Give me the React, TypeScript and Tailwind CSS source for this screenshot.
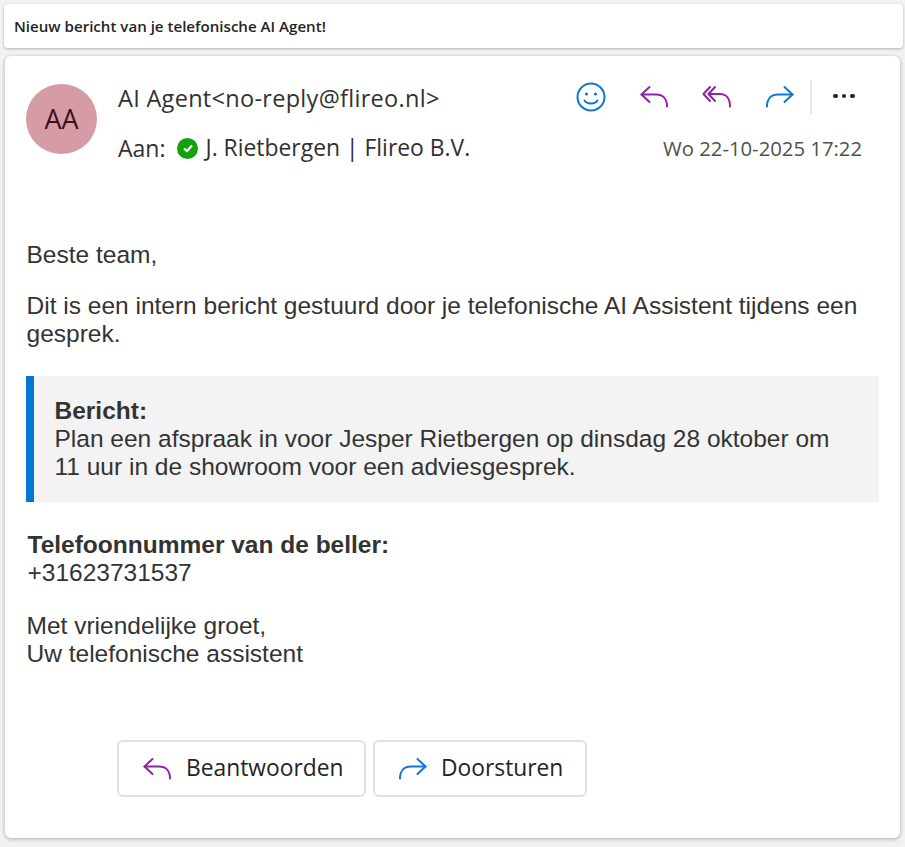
import React from "react";

const ReplyIcon = ({ className }: { className?: string }) => (
  <svg viewBox="0 0 30 24" fill="none" stroke="currentColor" strokeWidth="2" className={className}>
    <path d="M10.5 2 L2.5 9.5 L10.5 17" strokeLinecap="round" strokeLinejoin="round" />
    <path d="M2.5 9.5 H17 C23.5 9.5 28 13.5 28 21.5" strokeLinecap="round" />
  </svg>
);

const ReplyAllIcon = ({ className }: { className?: string }) => (
  <svg viewBox="0 0 30 24" fill="none" stroke="currentColor" strokeWidth="2" className={className}>
    <path d="M8 2 L1.5 9 L8 16" strokeLinecap="round" strokeLinejoin="round" />
    <path d="M13 2 L6.5 9 L13 16" strokeLinecap="round" strokeLinejoin="round" />
    <path d="M7 9 H18 C24 9 28 13.5 28 21.5" strokeLinecap="round" />
  </svg>
);

const ForwardIcon = ({ className }: { className?: string }) => (
  <svg viewBox="0 0 30 24" fill="none" stroke="currentColor" strokeWidth="2" className={className}>
    <path d="M19.5 2 L27.5 9.5 L19.5 17" strokeLinecap="round" strokeLinejoin="round" />
    <path d="M27.5 9.5 H13 C6.5 9.5 2 13.5 2 21.5" strokeLinecap="round" />
  </svg>
);

const SmileIcon = () => (
  <svg viewBox="0 0 30 30" fill="none" stroke="currentColor" strokeWidth="2" className="w-[30px] h-[30px] text-[#0f78d4]">
    <circle cx="15" cy="15" r="13.5" />
    <circle cx="10.5" cy="12" r="1.6" fill="currentColor" stroke="none" />
    <circle cx="19.5" cy="12" r="1.6" fill="currentColor" stroke="none" />
    <path d="M8.5 18.5 C11 22.5 19 22.5 21.5 18.5" strokeLinecap="round" />
  </svg>
);

const App = () => {
  return (
    <div className="w-[905px] h-[847px] bg-[#f2f2f2] px-[4px] pt-[4px] overflow-hidden text-[#323130] font-['Open_Sans',sans-serif]">
      <div className="w-[899px] h-[44px] bg-white rounded-[4px] shadow-[0_1px_3px_rgba(0,0,0,0.28)] flex items-center pl-[10px] text-[15.1px] font-semibold text-[#242424]">
        Nieuw bericht van je telefonische AI Agent!
      </div>

      <div className="ml-[1px] mt-[8px] w-[895px] h-[782px] bg-white rounded-[6px] shadow-[0_1px_4px_rgba(0,0,0,0.3)] pl-[21px] pt-[28px]">
        <div className="flex">
          <div className="w-[71px] h-[70px] rounded-full bg-[#d69ca5] text-[#420f1f] flex items-center justify-center text-[27px] font-medium shrink-0">
            AA
          </div>
          <div className="ml-[21px] w-[748px]">
            <div className="flex items-center h-[30px] -mt-[1px] relative">
              <span className="text-[23.5px] tracking-[0.3px] leading-[30px]">AI Agent&lt;no-reply@flireo.nl&gt;</span>
              <div className="absolute left-[458px] top-[-3px] flex items-center h-[34px]">
                <SmileIcon />
                <ReplyIcon className="w-[30px] h-[24px] ml-[33px] text-[#8e24a0]" />
                <ReplyAllIcon className="w-[30px] h-[24px] ml-[33px] text-[#8e24a0]" />
                <ForwardIcon className="w-[30px] h-[24px] ml-[33px] text-[#0f78d4]" />
                <div className="w-[2px] h-[34px] bg-[#e6e6e6] ml-[15px]" />
                <div className="flex gap-[4px] ml-[21px] -mt-[2px]">
                  <span className="w-[4.5px] h-[4.5px] rounded-full bg-[#242424]" />
                  <span className="w-[4.5px] h-[4.5px] rounded-full bg-[#242424]" />
                  <span className="w-[4.5px] h-[4.5px] rounded-full bg-[#242424]" />
                </div>
              </div>
            </div>
            <div className="flex items-center h-[30px] mt-[20px]">
              <span className="text-[23px] leading-[30px]">Aan:</span>
              <span className="ml-[12px] w-[21px] h-[21px] rounded-full bg-[#13a10e] flex items-center justify-center">
                <svg viewBox="0 0 12 12" className="w-[12px] h-[12px]" fill="none" stroke="white" strokeWidth="2.2">
                  <path d="M2 6.5 L5 9 L10 3.5" />
                </svg>
              </span>
              <span className="ml-[7px] text-[22.9px] leading-[30px]">J. Rietbergen | Flireo B.V.</span>
              <span className="ml-auto mr-[4px] text-[20.3px] text-[#505050]">Wo 22-10-2025 17:22</span>
            </div>
          </div>
        </div>

        <div className="font-['Liberation_Sans',sans-serif] text-[24.5px] leading-[28px] text-[#333333] pr-[21px] pl-[0.5px] mt-[78px]">
          <p>Beste team,</p>
          <p className="mt-[23px] w-[851px]">
            Dit is een intern bericht gestuurd door je telefonische AI Assistent tijdens een gesprek.
          </p>
          <div className="mt-[28px] -ml-[1px] w-[853px] h-[126px] bg-[#f3f3f3] border-l-[8px] border-[#0078d4] pl-[21px] pt-[21px]">
            <p className="font-bold">Bericht:</p>
            <p className="w-[790px]">
              Plan een afspraak in voor Jesper Rietbergen op dinsdag 28 oktober om 11 uur in de showroom voor een adviesgesprek.
            </p>
          </div>
          <div className="mt-[29px] pl-[1px]">
            <p className="font-bold">Telefoonnummer van de beller:</p>
            <p>+31623731537</p>
          </div>
          <p className="mt-[25px]">Met vriendelijke groet,</p>
          <p>Uw telefonische assistent</p>
        </div>

        <div className="flex gap-[7px] ml-[91px] mt-[72px] text-[22.8px] text-[#242424]">
          <button className="w-[249px] h-[57px] border-2 border-[#e1e1e1] rounded-[6px] flex items-center pl-[23px]">
            <ReplyIcon className="w-[30px] h-[24px] text-[#8e24a0]" />
            <span className="ml-[14px]">Beantwoorden</span>
          </button>
          <button className="w-[214px] h-[57px] border-2 border-[#e1e1e1] rounded-[6px] flex items-center pl-[23px]">
            <ForwardIcon className="w-[30px] h-[24px] text-[#0f78d4]" />
            <span className="ml-[13px]">Doorsturen</span>
          </button>
        </div>
      </div>
    </div>
  );
};

export default App;
